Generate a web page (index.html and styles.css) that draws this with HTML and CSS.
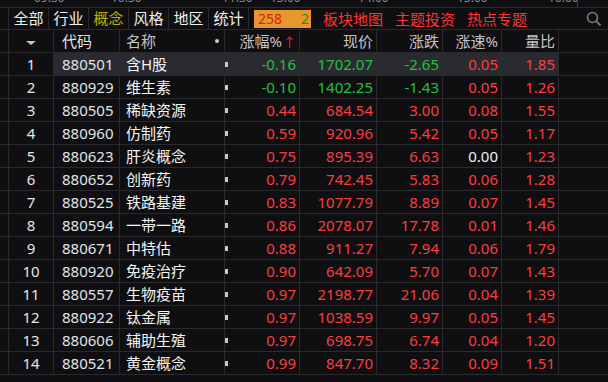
FILE: index.html
```html
<!DOCTYPE html>
<html lang="zh-CN">
<head>
  <meta charset="UTF-8" />
  <title>板块行情</title>
  <link rel="stylesheet" href="styles.css">
</head>
<body>
  <div class="timebar">
    <span class="tick" style="left:34px">09:30</span>
    <span class="tick" style="left:111px">10:30</span>
    <span class="tick" style="left:222px">11:30</span>
    <span class="tick" style="left:270px">13:00</span>
    <span class="tick" style="left:358px">14:00</span>
    <span class="tick" style="left:457px">15:00</span>
    <span class="tick" style="left:548px">16:00</span>
    <span class="nowline"></span>
  </div>

  <div class="tabs">
    <span class="tab">全部</span>
    <span class="tab">行业</span>
    <span class="tab active">概念</span>
    <span class="tab">风格</span>
    <span class="tab">地区</span>
    <span class="tab">统计</span>
    <span class="badge"><b class="up">258</b><b class="down">2</b></span>
    <span class="link">板块地图</span>
    <span class="link">主题投资</span>
    <span class="link">热点专题</span>
    <svg class="search" width="16" height="16" viewBox="0 0 16 16">
      <circle cx="6.5" cy="6.5" r="5" fill="none" stroke="#7a7a7e" stroke-width="1.6"/>
      <line x1="10.2" y1="10.2" x2="14.5" y2="14.5" stroke="#7a7a7e" stroke-width="1.8"/>
    </svg>
  </div>

  <div class="grid" id="grid">
    <div class="row head">
      <div class="c edge"></div>
      <div class="c idx"><span class="tri"></span></div>
      <div class="c code">代码</div>
      <div class="c name">名称<span class="hdot"></span></div>
      <div class="c num">涨幅%<span class="arrow">↑</span></div>
      <div class="c num">现价</div>
      <div class="c num">涨跌</div>
      <div class="c num">涨速%</div>
      <div class="c num">量比</div>
      <div class="c rest"></div>
    </div>
  </div>

  <script>
    var rows = [
      ["880501","含H股","-0.16","1702.07","-2.65","0.05","1.85"],
      ["880929","维生素","-0.10","1402.25","-1.43","0.05","1.26"],
      ["880505","稀缺资源","0.44","684.54","3.00","0.08","1.55"],
      ["880960","仿制药","0.59","920.96","5.42","0.05","1.17"],
      ["880623","肝炎概念","0.75","895.39","6.63","0.00","1.23"],
      ["880652","创新药","0.79","742.45","5.83","0.06","1.28"],
      ["880525","铁路基建","0.83","1077.79","8.89","0.07","1.45"],
      ["880594","一带一路","0.86","2078.07","17.78","0.01","1.46"],
      ["880671","中特估","0.88","911.27","7.94","0.06","1.79"],
      ["880920","免疫治疗","0.90","642.09","5.70","0.07","1.43"],
      ["880557","生物疫苗","0.97","2198.77","21.06","0.04","1.39"],
      ["880922","钛金属","0.97","1038.59","9.97","0.05","1.45"],
      ["880606","辅助生殖","0.97","698.75","6.74","0.04","1.20"],
      ["880521","黄金概念","0.99","847.70","8.32","0.09","1.51"]
    ];
    var grid = document.getElementById("grid");
    function cls(v) {
      if (parseFloat(v) < 0) return "green";
      if (parseFloat(v) > 0) return "red";
      return "white";
    }
    rows.forEach(function (r, i) {
      var row = document.createElement("div");
      row.className = "row" + (i === 0 ? " sel" : "");
      var chg = cls(r[2]);
      row.innerHTML =
        '<div class="c edge"></div>' +
        '<div class="c idx">' + (i + 1) + '</div>' +
        '<div class="c code">' + r[0] + '</div>' +
        '<div class="c name">' + r[1] + '</div>' +
        '<div class="c num pct"><span class="dot"></span><span class="' + chg + '">' + r[2] + '</span></div>' +
        '<div class="c num ' + chg + '">' + r[3] + '</div>' +
        '<div class="c num ' + chg + '">' + r[4] + '</div>' +
        '<div class="c num ' + cls(r[5]) + '">' + r[5] + '</div>' +
        '<div class="c num red">' + r[6] + '</div>' +
        '<div class="c rest"></div>';
      grid.appendChild(row);
    });
  </script>
</body>
</html>
```

FILE: styles.css
```css
body {
  margin: 0;
  background: #0f0f12;
  color: #e6e6e6;
  font-family: "Noto Sans", "Noto Sans CJK SC", sans-serif;
  font-size: 15px;
  width: 608px;
  height: 382px;
  overflow: hidden;
}
.timebar {
  position: relative;
  height: 7px;
  border-bottom: 1px solid #2a2a2e;
  overflow: hidden;
}
.tick {
  position: absolute;
  top: -9px;
  font-size: 12px;
  color: #8a8a8e;
  line-height: 14px;
}
.nowline {
  position: absolute;
  left: 577px;
  top: 0;
  width: 1px;
  height: 7px;
  background: #8a1f24;
}
.tabs {
  display: flex;
  align-items: center;
  height: 21px;
  padding-left: 8px;
  border-bottom: 1px solid #2a2a2e;
}
.tab {
  width: 39px;
  height: 21px;
  line-height: 21px;
  text-align: center;
  border-left: 1px solid #2a2a2e;
  color: #f0f0f0;
}
.tab:nth-child(6) {
  border-right: 1px solid #2a2a2e;
}
.tab.active {
  color: #b9b400;
}
.badge {
  display: flex;
  justify-content: space-between;
  align-items: center;
  width: 57px;
  height: 18px;
  margin-left: 5px;
  background: #e8962e;
  font-size: 14px;
  line-height: 18px;
}
.badge b {
  font-weight: normal;
}
.badge .up {
  color: #d8201e;
  padding-left: 4px;
}
.badge .down {
  color: #1c8f20;
  padding-right: 2px;
}
.link {
  color: #ff3434;
  margin-left: 12px;
}
.link:first-of-type {
  margin-left: 13px;
}
.search {
  margin-left: auto;
  margin-right: 6px;
}
.row {
  display: flex;
  height: 22px;
  border-bottom: 1px solid #2a2a2e;
}
.row.head {
  color: #c4c4c8;
}
.c {
  box-sizing: border-box;
  height: 22px;
  line-height: 22px;
  border-right: 1px solid #2a2a2e;
  white-space: nowrap;
}
.edge { width: 9px; }
.idx { width: 45px; text-align: center; color: #e6e6e6; }
.code { width: 66px; padding-left: 8px; color: #e0e4ea; }
.name { width: 105px; padding-left: 6px; color: #f4f4f4; position: relative; }
.row.head .name { color: #c4c4c8; }
.num { width: 75px; text-align: right; padding-right: 3px; }
.num:nth-child(6) { width: 77px; }
.num:nth-child(7) { width: 66px; }
.num:nth-child(8) { width: 59px; }
.num:nth-child(9) { width: 57px; }
.rest { flex: 1; border-right: none; }
.pct {
  display: flex;
  justify-content: space-between;
  align-items: center;
}
.dot {
  width: 4px;
  height: 5px;
  background: #c8c8c8;
  margin-left: -1px;
}
.hdot {
  position: absolute;
  right: 5px;
  top: 9px;
  width: 4px;
  height: 4px;
  border-radius: 2px;
  background: #c8c8c8;
}
.arrow {
  color: #ff2020;
  font-size: 13px;
  margin-left: 1px;
}
.tri {
  display: inline-block;
  width: 0;
  height: 0;
  border-left: 5px solid transparent;
  border-right: 5px solid transparent;
  border-top: 4px solid #c4c4c8;
  vertical-align: middle;
}
.row.sel .idx ~ .c:not(.rest) {
  background: #2a2a31;
}
.green { color: #22c13c; }
.red { color: #ff3c3c; }
.white { color: #f0f0f0; }
```
